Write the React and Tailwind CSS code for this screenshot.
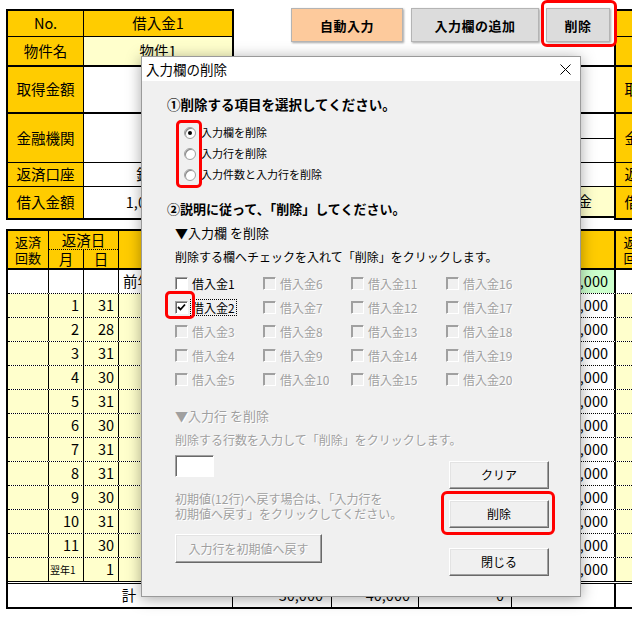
import React from 'react';

const Y = 'bg-[#ffcc00]';
const LY = 'bg-[#ffffcc]';

const topRows = [
  { label: 'No.', h: 'h-[26px]', bb: 'border-b', vbg: Y },
  { label: '物件名', value: '物件1', h: 'h-[30px]', bb: 'border-b-2', vbg: LY },
  { label: '取得金額', value: '', h: 'h-[47px]', bb: 'border-b-2', vbg: 'bg-white' },
  { label: '金融機関', value: '', h: 'h-[49px]', bb: 'border-b', vbg: 'bg-white' },
  { label: '返済口座', value: '銀行名', h: 'h-[24px]', bb: 'border-b', vbg: 'bg-white' },
  { label: '借入金額', value: '1,000,000', h: 'h-[31px]', bb: '', vbg: 'bg-white' },
];

const TopTable = ({ no }) => (
  <div className="mt-[9px] w-[228px] shrink-0 border-2 border-black">
    {topRows.map((r, i) => (
      <div key={i} className={`flex ${r.h} ${r.bb} border-black`}>
        <div className={`w-[76px] shrink-0 border-r border-black ${Y} flex items-center justify-center`}>{r.label}</div>
        <div className={`flex-1 ${r.vbg} flex items-center justify-center`}>{i === 0 ? `借入金${no}` : r.value}</div>
      </div>
    ))}
  </div>
);

const XlButton = ({ children, className }) => (
  <div className={`h-[34px] flex items-center justify-center text-[13px] font-bold tracking-[0.5px] border border-[#b4b4b4] shadow-[1px_1px_2px_rgba(0,0,0,0.35)] ${className}`}>
    {children}
  </div>
);

const months = ['', '1', '2', '3', '4', '5', '6', '7', '8', '9', '10', '11', '翌年1'];
const days = ['', '31', '28', '31', '30', '31', '30', '31', '31', '30', '31', '30', '1'];

const disabledText = 'text-[#a0a0a0] [text-shadow:1px_1px_0_#fff]';

const CheckBox = ({ checked, disabled }) => (
  <div
    className={`w-[13px] h-[13px] shrink-0 border border-t-[#a0a0a0] border-l-[#a0a0a0] border-r-white border-b-white flex items-center justify-center ${
      disabled ? 'bg-[#f0f0f0] shadow-[inset_1px_1px_0_#a0a0a0]' : 'bg-white shadow-[inset_1px_1px_0_#696969]'
    }`}
  >
    {checked && (
      <svg width="9" height="9" viewBox="0 0 9 9">
        <path d="M1 4 L3.5 6.5 L8 1.5" stroke="#000" strokeWidth="1.8" fill="none" />
      </svg>
    )}
  </div>
);

const Radio = ({ on }) => (
  <div className="w-[12px] h-[12px] shrink-0 rounded-full bg-white border border-[#a0a0a0] shadow-[inset_1px_1px_0_#8a8a8a] flex items-center justify-center">
    {on && <div className="w-[4px] h-[4px] rounded-full bg-black" />}
  </div>
);

const DlgButton = ({ children, disabled, className }) => (
  <div
    className={`h-[28px] flex items-center justify-center text-[12px] bg-[#f0f0f0] border border-t-white border-l-white border-r-[#696969] border-b-[#696969] shadow-[inset_-1px_-1px_0_#a0a0a0,inset_1px_1px_0_#e3e3e3] ${
      disabled ? disabledText : 'text-black'
    } ${className}`}
  >
    {children}
  </div>
);

export default function App() {
  const loans = Array.from({ length: 20 }, (_, i) => i + 1);

  return (
    <div className="relative w-[632px] h-[618px] overflow-hidden bg-white text-black [font-family:'Noto_Sans_CJK_JP',sans-serif]">
      {/* spreadsheet */}
      <div className="pl-[6px] w-[720px] text-[14.5px] leading-none">
        <div className="flex items-start h-[220px]">
          <TopTable no={1} />

          <div className="w-[380px] shrink-0">
            <div className="flex pt-[8px] pl-[57px]">
              <XlButton className="w-[112px] bg-[#fdca9c]">自動入力</XlButton>
              <XlButton className="w-[128px] ml-[8px] bg-[#dcdcdc]">入力欄の追加</XlButton>
              <XlButton className="w-[64px] ml-[7px] bg-[#dcdcdc]">削除</XlButton>
            </div>
            <div className="mt-[23px] border-t-2 border-black">
              <div className="h-[47px] border-b-2 border-black" />
              <div className="h-[25px] border-b border-black" />
              <div className="h-[24px] border-b border-black" />
              <div className="h-[24px] border-b border-black" />
              <div className={`h-[31px] border-b-2 border-black ${LY} flex items-center justify-end pr-[22px]`}>元金</div>
            </div>
          </div>

          <TopTable no={2} />
        </div>

        {/* lower table */}
        <div className="mt-[9px] border-t-2 border-l-2 border-b-2 border-black">
          <div className={`flex h-[39px] border-b-2 border-black ${Y}`}>
            <div className="w-[41px] shrink-0 border-r border-black flex flex-col items-center justify-center text-[13px] leading-[16px]">
              <span>返済</span>
              <span>回数</span>
            </div>
            <div className="w-[70px] shrink-0 border-r border-black flex flex-col">
              <div className="h-[19px] border-b border-dotted border-black flex items-center justify-center">返済日</div>
              <div className="flex-1 flex">
                <div className="w-[35px] border-r border-black flex items-center justify-center">月</div>
                <div className="flex-1 flex items-center justify-center">日</div>
              </div>
            </div>
            <div className="w-[114px] shrink-0 border-r border-black" />
            <div className="w-[99px] shrink-0 border-r border-black" />
            <div className="w-[87px] shrink-0 border-r border-black" />
            <div className="w-[93px] shrink-0 border-r border-black" />
            <div className="w-[104px] shrink-0 border-r-2 border-black" />
            <div className="w-[41px] shrink-0 flex flex-col items-center justify-center text-[13px] leading-[16px]">
              <span>返済</span>
              <span>回数</span>
            </div>
          </div>

          {months.map((m, i) => {
            const first = i === 0;
            const last = i === months.length - 1;
            const bg = first ? 'bg-white' : LY;
            return (
              <div key={i} className={`flex ${last ? 'h-[23px]' : 'h-[24px] border-b border-dotted border-black'}`}>
                <div className={`w-[41px] shrink-0 border-r border-black ${bg}`} />
                <div className={`w-[35px] shrink-0 border-r border-black ${bg} flex items-center ${last ? 'text-[10px] justify-start pl-[1px]' : 'justify-end pr-[4px]'}`}>{m}</div>
                <div className={`w-[35px] shrink-0 border-r border-black ${bg} flex items-center justify-end pr-[4px]`}>{days[i]}</div>
                <div className={`w-[114px] shrink-0 border-r border-black ${bg} flex items-center pl-[4px]`}>{first ? '前年' : ''}</div>
                <div className={`w-[99px] shrink-0 border-r border-black ${bg}`} />
                <div className={`w-[87px] shrink-0 border-r border-black ${bg}`} />
                <div className={`w-[93px] shrink-0 border-r border-black ${bg}`} />
                <div className={`w-[104px] shrink-0 border-r-2 border-black ${first ? 'bg-[#ccffcc]' : 'bg-white'} flex items-center justify-end pr-[6px]`}>
                  ,000
                </div>
                <div className={`w-[41px] shrink-0 ${bg}`} />
              </div>
            );
          })}

          <div className="flex h-[26px] border-t-[3px] border-double border-black">
            <div className="w-[225px] shrink-0 border-r border-black flex items-center justify-center pl-[18px]">計</div>
            <div className="w-[99px] shrink-0 border-r border-black flex items-center justify-end pr-[8px]">30,000</div>
            <div className="w-[87px] shrink-0 border-r border-black flex items-center justify-end pr-[8px]">40,000</div>
            <div className="w-[93px] shrink-0 border-r border-black flex items-center justify-end pr-[7px]">0</div>
            <div className="w-[104px] shrink-0 border-r-2 border-black" />
            <div className="w-[41px] shrink-0" />
          </div>
        </div>
      </div>

      {/* annotation on sheet button */}
      <div className="absolute left-[541px] top-0 w-[76px] h-[47px] border-[3px] border-[#ff0000] rounded-[6px]" />

      {/* dialog */}
      <div className="absolute left-[141px] top-[56px] w-[440px] h-[541px] border border-[#9a9a9a] bg-[#f0f0f0] shadow-[0_2px_14px_rgba(0,0,0,0.35)] flex flex-col">
        <div className="h-[24px] shrink-0 bg-white flex items-center justify-between pl-[4px] pr-[9px] text-[13.5px] text-black">
          <span>入力欄の削除</span>
          <svg width="11" height="11" viewBox="0 0 11 11">
            <path d="M0.5 0.5 L10.5 10.5 M10.5 0.5 L0.5 10.5" stroke="#000" strokeWidth="1" />
          </svg>
        </div>

        <div className="relative flex-1 flex flex-col items-start leading-none">
          <div className="mt-[15px] ml-[25px] text-[13.5px] font-bold leading-[16px]">①削除する項目を選択してください。</div>

          <div className="mt-[10px] flex flex-col text-[11px]">
            {['入力欄を削除', '入力行を削除', '入力件数と入力行を削除'].map((t, i) => (
              <div key={t} className="h-[21px] flex items-center pl-[42px] gap-[5px]">
                <Radio on={i === 0} />
                <span>{t}</span>
              </div>
            ))}
          </div>

          <div className="mt-[16px] ml-[25px] text-[13px] font-bold leading-[16px]">②説明に従って、「削除」してください。</div>
          <div className="mt-[8px] ml-[33px] text-[13px] leading-[16px]">▼入力欄 を削除</div>
          <div className="mt-[8px] ml-[33px] text-[12px] leading-[15px]">削除する欄へチェックを入れて「削除」をクリックします。</div>

          <div className="mt-[7px] ml-[33px] grid grid-flow-col grid-rows-5 grid-cols-[88px_88px_95px_88px] auto-rows-[24px] text-[12px]">
            {loans.map((n) => {
              const disabled = n > 2;
              return (
                <div key={n} className="h-[24px] flex items-center gap-[2px]">
                  <CheckBox checked={n === 2} disabled={disabled} />
                  <span
                    className={`px-[1px] leading-[15px] ${disabled ? disabledText : ''} ${
                      n === 2 ? 'border border-dotted border-black' : 'border border-transparent'
                    }`}
                  >
                    借入金{n}
                  </span>
                </div>
              );
            })}
          </div>

          <div className={`mt-[17px] ml-[33px] text-[13px] leading-[16px] ${disabledText}`}>▼入力行 を削除</div>
          <div className={`mt-[8px] ml-[33px] text-[12px] leading-[15px] ${disabledText}`}>削除する行数を入力して「削除」をクリックします。</div>

          <div className="mt-[8px] ml-[33px] flex items-start">
            <div className="w-[274px] flex flex-col items-start">
              <div className="w-[39px] h-[22px] bg-white border border-t-[#a0a0a0] border-l-[#a0a0a0] border-r-white border-b-white shadow-[inset_1px_1px_0_#696969]" />
              <div className={`mt-[14px] text-[12px] leading-[15px] ${disabledText}`}>
                初期値(12行)へ戻す場合は、「入力行を
                <br />
                初期値へ戻す」をクリックしてください。
              </div>
              <DlgButton disabled className="mt-[13px] w-[147px] h-[29px]">入力行を初期値へ戻す</DlgButton>
            </div>
            <div className="mt-[6px] flex flex-col">
              <DlgButton className="w-[100px]">クリア</DlgButton>
              <DlgButton className="w-[100px] mt-[11px]">削除</DlgButton>
              <DlgButton className="w-[100px] mt-[20px]">閉じる</DlgButton>
            </div>
          </div>

          {/* annotations */}
          <div className="absolute left-[34px] top-[39px] w-[26px] h-[68px] border-[3px] border-[#ff0000] rounded-[5px]" />
          <div className="absolute left-[23px] top-[210px] w-[30px] h-[28px] border-[3px] border-[#ff0000] rounded-[5px]" />
          <div className="absolute left-[299px] top-[410px] w-[114px] h-[44px] border-[3px] border-[#ff0000] rounded-[6px]" />
        </div>
      </div>
    </div>
  );
}
